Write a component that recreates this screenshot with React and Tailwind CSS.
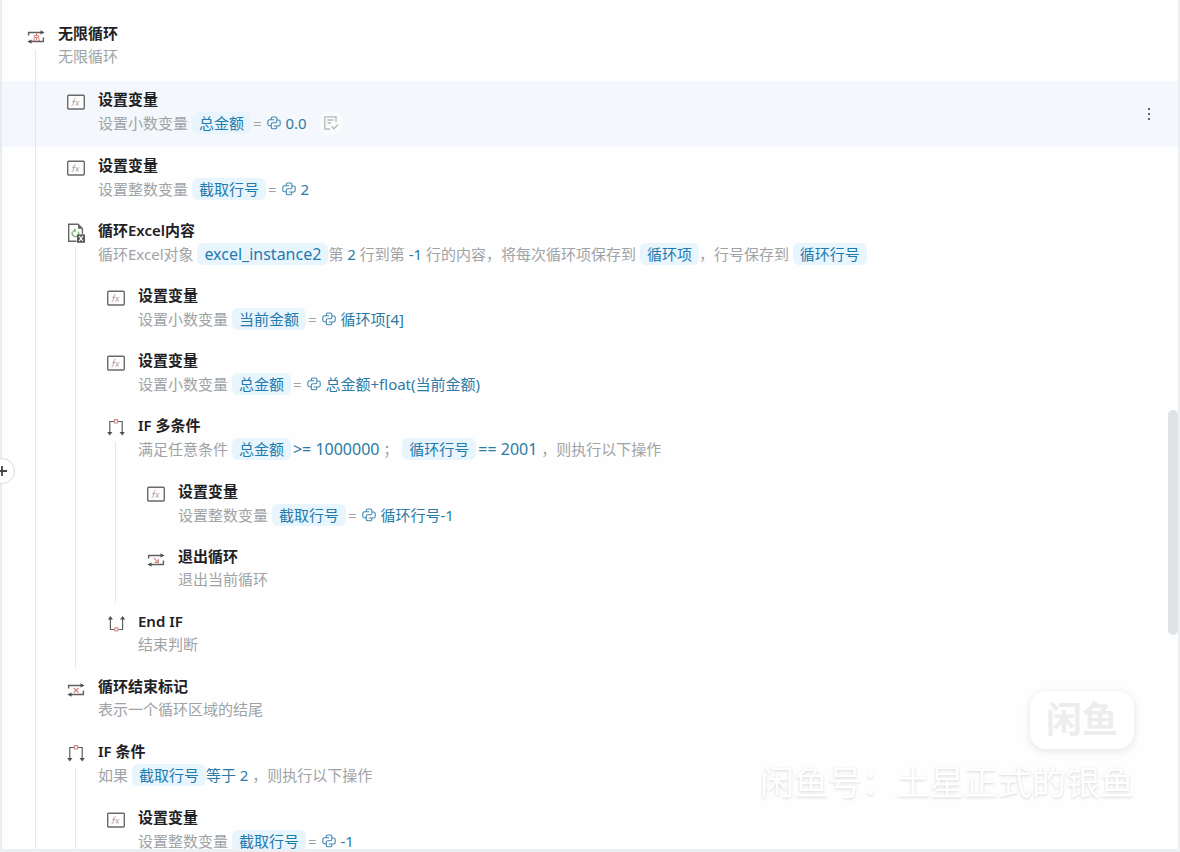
import clsx from "clsx";

// Flow steps in display order. "depth" is the nesting level,
// "open" marks a step whose guide line runs down to its children.
const steps = [
  { icon: "loop", depth: 0, open: true, tall: true, title: "无限循环", desc: [{ t: "无限循环" }] },
  {
    icon: "fx",
    depth: 1,
    active: true,
    tall: true,
    title: "设置变量",
    desc: [{ t: "设置小数变量 " }, { chip: "总金额" }, { eq: true }, { v: "0.0" }, { note: true }],
  },
  {
    icon: "fx",
    depth: 1,
    title: "设置变量",
    desc: [{ t: "设置整数变量 " }, { chip: "截取行号" }, { eq: true }, { v: "2" }],
  },
  {
    icon: "excel",
    depth: 1,
    open: true,
    title: "循环Excel内容",
    desc: [
      { t: "循环Excel对象 " },
      { chip: "excel_instance2", large: true },
      { t: "第 " },
      { v: "2" },
      { t: " 行到第 " },
      { v: "-1" },
      { t: " 行的内容，将每次循环项保存到 " },
      { chip: "循环项" },
      { t: "，行号保存到 " },
      { chip: "循环行号" },
    ],
  },
  {
    icon: "fx",
    depth: 2,
    title: "设置变量",
    desc: [{ t: "设置小数变量 " }, { chip: "当前金额" }, { eq: true }, { v: "循环项[4]" }],
  },
  {
    icon: "fx",
    depth: 2,
    title: "设置变量",
    desc: [{ t: "设置小数变量 " }, { chip: "总金额" }, { eq: true }, { v: "总金额+float(当前金额)" }],
  },
  {
    icon: "if",
    depth: 2,
    open: true,
    tall: true,
    title: "IF 多条件",
    desc: [
      { t: "满足任意条件 " },
      { chip: "总金额" },
      { v: ">= 1000000", large: true },
      { t: " ； " },
      { chip: "循环行号" },
      { v: "== 2001", large: true },
      { t: " ，则执行以下操作" },
    ],
  },
  {
    icon: "fx",
    depth: 3,
    title: "设置变量",
    desc: [{ t: "设置整数变量 " }, { chip: "截取行号" }, { eq: true }, { v: "循环行号-1" }],
  },
  { icon: "break", depth: 3, title: "退出循环", desc: [{ t: "退出当前循环" }] },
  { icon: "endif", depth: 2, title: "End IF", desc: [{ t: "结束判断" }] },
  { icon: "endloop", depth: 1, title: "循环结束标记", desc: [{ t: "表示一个循环区域的结尾" }] },
  {
    icon: "if",
    depth: 1,
    open: true,
    tall: true,
    title: "IF 条件",
    desc: [{ t: "如果 " }, { chip: "截取行号" }, { v: "等于 2" }, { t: " ，则执行以下操作" }],
  },
  {
    icon: "fx",
    depth: 2,
    title: "设置变量",
    desc: [{ t: "设置整数变量 " }, { chip: "截取行号" }, { eq: true }, { v: "-1" }],
  },
];

const LoopFrame = ({ children }) => (
  <svg viewBox="0 0 20 20" className="h-5 w-5" fill="none" aria-hidden="true">
    <path d="M2.6 9.5V6.5H15.5M17.4 11.5V15.5H4.5" stroke="#5f5f5f" strokeWidth="1.4" />
    <path d="M14.5 4.2L18.6 6.4L14.5 8.4ZM5.5 13.6L1.4 15.6L5.5 17.8Z" fill="#4f4f4f" />
    {children}
  </svg>
);

const StepIcon = ({ name }) => {
  switch (name) {
    case "loop":
      return (
        <LoopFrame>
          <path
            d="M10.5 6.8V9M8.4 9.5H12.6V11.5H8.4ZM8 15V12M10.5 12V14.6M13 15V12M7 14.6H8.6M12.4 14.6H14"
            stroke="#d07f7f"
            strokeWidth="1"
          />
        </LoopFrame>
      );
    case "break":
      return (
        <LoopFrame>
          <path d="M7.6 8.8L12 13M12.4 9.8V13.4H8.8" stroke="#c98f8f" strokeWidth="1.1" />
        </LoopFrame>
      );
    case "endloop":
      return (
        <LoopFrame>
          <path d="M7.8 8.8L12.6 13.6M12.6 8.8L7.8 13.6" stroke="#cf7b7b" strokeWidth="1.2" />
        </LoopFrame>
      );
    case "excel":
      return (
        <svg viewBox="0 0 20 20" className="h-5 w-5" fill="none" aria-hidden="true">
          <path d="M10.5 18.2H2.7V1.2H12L16.4 5.6V11" stroke="#666" strokeWidth="1.4" />
          <path d="M12 1V5.8H16.8Z" fill="#666" />
          <path d="M6.6 8.6A3.3 3.3 0 1 0 12.2 8.6" stroke="#7cb873" strokeWidth="1.3" />
          <path d="M6.4 9L10.4 8.6L9 5Z" fill="#7cb873" />
          <rect x="11" y="11.4" width="8" height="8.4" fill="#5a5a5a" />
          <path d="M13.2 13.2L16.8 18M16.8 13.2L13.2 18" stroke="#fff" strokeWidth="1.2" />
        </svg>
      );
    case "if":
      return (
        <svg viewBox="0 0 20 20" className="h-5 w-5" fill="none" aria-hidden="true">
          <path d="M8 3.5H3.8V15M12.2 3.5H16.2V15" stroke="#5f5f5f" strokeWidth="1.2" />
          <path d="M1.2 14H6.4L3.8 17.6ZM13.6 14H18.8L16.2 17.6Z" fill="#4f4f4f" />
          <rect x="8.2" y="1.6" width="3.4" height="3.4" rx="0.8" stroke="#d07f7f" strokeWidth="1.2" />
        </svg>
      );
    case "endif":
      return (
        <svg viewBox="0 0 20 20" className="h-5 w-5" fill="none" aria-hidden="true">
          <path d="M8.4 15.5H4.4V4M12.6 15.5H16.6V4" stroke="#5f5f5f" strokeWidth="1.2" />
          <path d="M1.8 5.6H7L4.4 2ZM14 5.6H19.2L16.6 2Z" fill="#4f4f4f" />
          <rect x="8.8" y="13.8" width="3.2" height="3.2" rx="0.8" stroke="#d07f7f" strokeWidth="1.1" />
        </svg>
      );
    default:
      return (
        <svg viewBox="0 0 20 20" className="h-5 w-5" fill="none" aria-hidden="true">
          <rect x="1.7" y="3.2" width="16.6" height="13.8" rx="1" fill="#fdfdfd" stroke="#6a6a6a" strokeWidth="1.4" />
          <path
            d="M9.6 6.6C8.6 6.1 8.2 7 8 8L7 12.6C6.8 13.6 6.3 14 5.6 13.6M6.4 9.4H9.4M9.8 9.6C11 9 11 10.6 11.2 11.6C11.4 13.2 12 13.4 13 12.8M13.4 9.4C12 9.4 11 13.2 9.4 13.2"
            stroke="#b39a9a"
            strokeWidth="0.9"
          />
        </svg>
      );
  }
};

const PythonIcon = () => (
  <svg
    viewBox="0 0 14 14"
    className="mr-[5px] ml-[5px] h-3.5 w-3.5 shrink-0"
    fill="none"
    stroke="#4289b3"
    strokeWidth="1.1"
    aria-hidden="true"
  >
    <path d="M7.2 3.8H4.3V2.3C4.3 1.4 5 1 5.9 1H8.3C9.2 1 9.9 1.5 9.9 2.4V5.3C9.9 6.2 9.3 6.8 8.4 6.8H5.8C4.9 6.8 4.3 7.3 4.3 8.2V9.8H2.4C1.4 9.8 0.8 9 0.8 8V5.6C0.8 4.5 1.5 3.8 2.5 3.8H4.3" />
    <path d="M6.8 10H9.8V11.5C9.8 12.4 9.1 12.8 8.2 12.8H5.8C4.9 12.8 4.3 12.4 4.3 11.5V9.8M9.9 4H11.6C12.6 4 13.2 4.8 13.2 5.8V8.2C13.2 9.3 12.5 10 11.5 10H9.8" />
  </svg>
);

const NoteButton = () => (
  <button
    type="button"
    aria-label="备注"
    className="-my-1 ml-3 flex h-6 w-6 items-center justify-center rounded-full bg-[#f9fbfc]"
  >
    <svg viewBox="0 0 16 16" className="h-4 w-4" fill="none" stroke="#b3bbb8" strokeWidth="1.3" aria-hidden="true">
      <path d="M7 14H1.8V1.8H13V7M4.4 5H10.4M4.4 8H8" />
      <path d="M8.6 11.4L10.8 13.8L15 9.6" stroke="#a9c0b0" />
    </svg>
  </button>
);

const DescPart = ({ part }) => {
  if (part.chip) {
    return (
      <span
        className={clsx(
          "rounded-md bg-[#e9f5fd] px-[7px] leading-[22px] text-[#1f7bae]",
          part.large && "text-[16px]"
        )}
      >
        {part.chip}
      </span>
    );
  }
  if (part.eq) {
    return (
      <>
        <span className="ml-0.5">=</span>
        <PythonIcon />
      </>
    );
  }
  if (part.note) return <NoteButton />;
  if (part.v) {
    return (
      <span className={clsx("text-[#2b7ba5]", part.large && "ml-0.5 text-[16px]")}>{part.v}</span>
    );
  }
  return <span>{part.t}</span>;
};

const Step = ({ step }) => (
  <li
    className={clsx(
      "flex shrink-0 pl-3.5",
      step.active && "bg-[#f4f7fb]",
      step.tall ? "min-h-[66px]" : "min-h-[65px]"
    )}
  >
    {/* Guide lines of the parent levels */}
    {Array.from({ length: step.depth }, (_, i) => (
      <div key={i} className="mr-5 w-5 shrink-0 border-r border-[#e6e6e6]" />
    ))}

    <div className="flex w-10 shrink-0 flex-col pt-[11px]">
      <div className="flex justify-center">
        <StepIcon name={step.icon} />
      </div>
      {step.open && <div className="mt-1 w-5 flex-1 border-r border-[#e6e6e6]" />}
    </div>

    <div className="min-w-0 flex-1 pt-2 pl-0.5">
      <h3 className="text-[15px] leading-5 font-semibold text-[#1f2124]">{step.title}</h3>
      <div className="mt-[3px] flex items-center text-[15px] leading-5 whitespace-pre text-[#a0a3a6]">
        {step.desc.map((part, i) => (
          <DescPart key={i} part={part} />
        ))}
      </div>
    </div>

    {step.active && (
      <button type="button" aria-label="更多" className="mr-[19px] flex w-5 flex-col items-center justify-center gap-[3px]">
        <span className="h-0.5 w-0.5 bg-[#666]" />
        <span className="h-0.5 w-0.5 bg-[#666]" />
        <span className="h-0.5 w-0.5 bg-[#666]" />
      </button>
    )}
  </li>
);

const Watermark = () => (
  <div className="pointer-events-none absolute right-[46px] bottom-[47px] flex flex-col items-end">
    <div className="flex h-[58px] w-[104px] items-center justify-center rounded-2xl bg-white text-[36px] leading-none font-semibold text-[#ededed] shadow-[0_2px_8px_rgba(0,0,0,0.11)]">
      闲鱼
    </div>
    <p className="mt-2.5 text-[34px] leading-[46px] whitespace-nowrap text-white [text-shadow:0_1px_3px_rgba(0,0,0,0.16)]">
      闲鱼号：土星正式的银鱼
    </p>
  </div>
);

export default function App() {
  return (
    <div
      lang="zh-CN"
      className="relative flex h-screen overflow-hidden bg-[#eceff1] pr-0.5 pb-[3px] font-['Noto_Sans','Noto_Sans_CJK_SC',sans-serif]"
    >
      <main className="ml-px flex-1 overflow-hidden border-l border-[#e8e8e8] bg-[#fefefe]">
        <ul className="flex flex-col pt-[15px]">
          {steps.map((step, i) => (
            <Step key={i} step={step} />
          ))}
        </ul>
      </main>

      {/* Panel toggle on the left edge */}
      <button
        type="button"
        aria-label="添加"
        className="absolute top-[458px] -left-[11px] flex h-[26px] w-[26px] items-center justify-center rounded-full border border-[#dcdcdc] bg-white"
      >
        <svg viewBox="0 0 12 12" className="h-3 w-3" stroke="#444" strokeWidth="1.8" aria-hidden="true">
          <path d="M6 1V11M1 6H11" />
        </svg>
      </button>

      {/* Scrollbar thumb */}
      <div className="absolute top-[410px] right-0.5 h-[225px] w-2.5 rounded-full bg-[#dfe3e6]" />

      <Watermark />
    </div>
  );
}
